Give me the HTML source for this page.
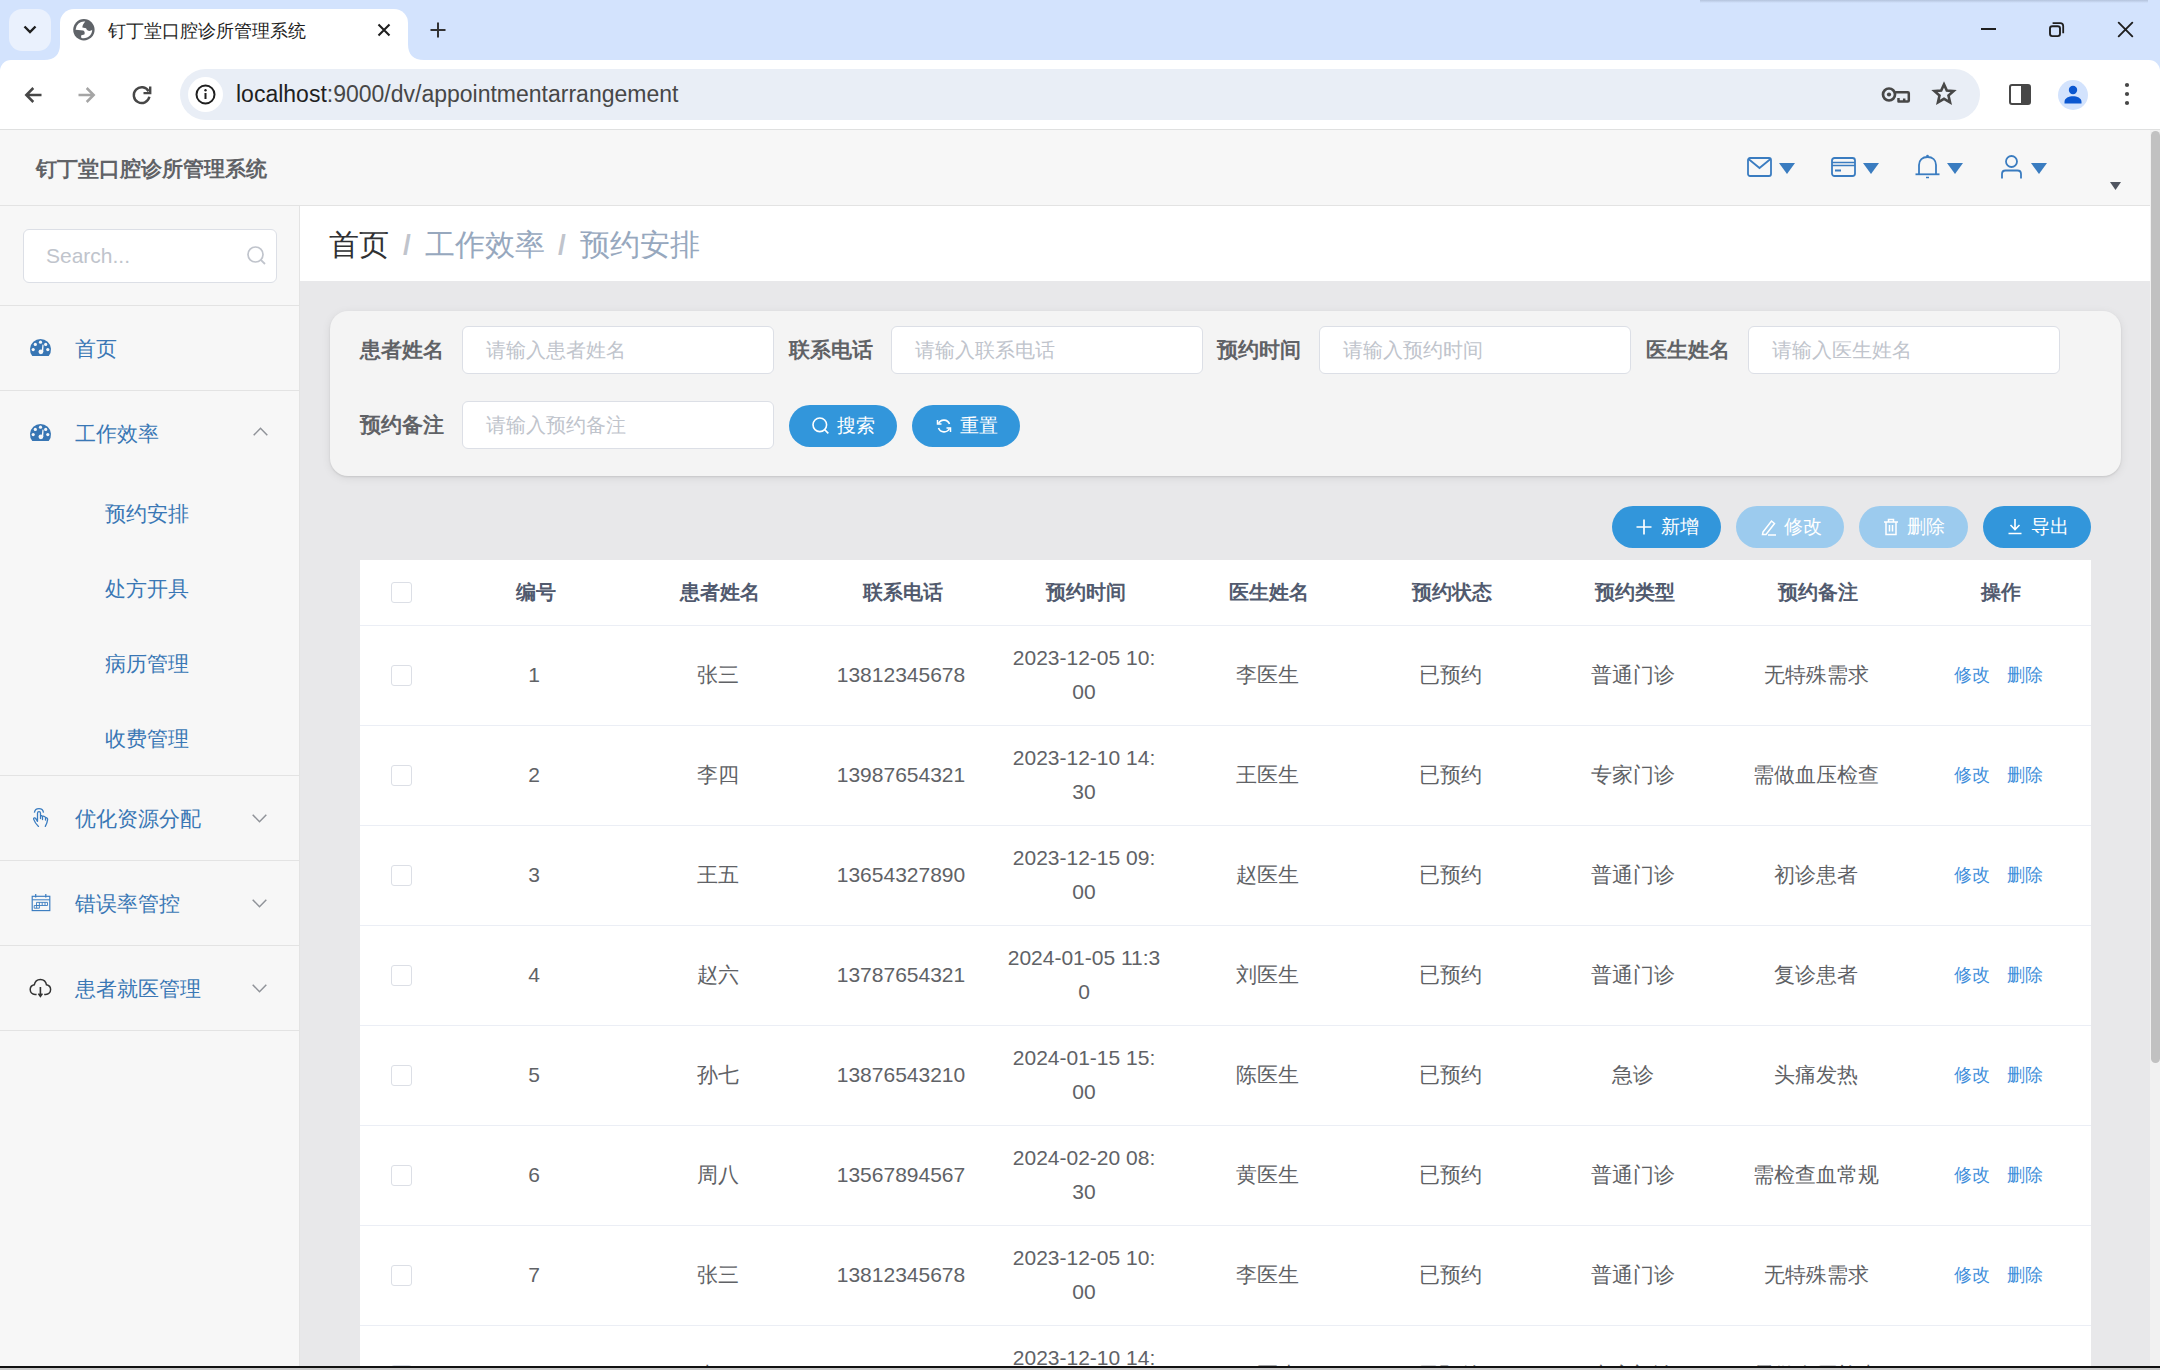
<!DOCTYPE html>
<html><head><meta charset="utf-8">
<style>
*{margin:0;padding:0;box-sizing:border-box}
html,body{width:2160px;height:1370px;overflow:hidden;background:#fff;font-family:"Liberation Sans",sans-serif}
.a{position:absolute}
svg{position:absolute;overflow:visible}
#tabstrip{left:0;top:0;width:2160px;height:80px;background:#d3e3fd}
#toolbar{left:0;top:60px;width:2160px;height:69px;background:#fff}
#chromeline{left:0;top:129px;width:2160px;height:2px;background:#dfe0e0}
#urlpill{left:180px;top:69px;width:1800px;height:51px;border-radius:26px;background:#e9eef6}
.tabtitle{left:108px;top:18px;font-size:18px;line-height:26px;color:#1f1f1f;white-space:nowrap}
.url{left:236px;top:79px;font-size:23px;line-height:30px;color:#474747;white-space:nowrap}

#hdr{left:0;top:130px;width:2150px;height:76px;background:#f7f7f7;border-bottom:1px solid #e3e3e3}
.apptitle{left:36px;top:154px;font-size:21px;line-height:30px;font-weight:bold;color:#606266;white-space:nowrap}
#side{left:0;top:206px;width:300px;height:1164px;background:#f7f7f7;border-right:1px solid #e3e3e3}
#crumb{left:300px;top:206px;width:1850px;height:75px;background:#fff}
#content{left:300px;top:281px;width:1850px;height:1089px;background:#e8e8ea}
#sbtrack{left:2150px;top:130px;width:10px;height:1240px;background:#f1f1f1}
#sbthumb{left:2151px;top:131px;width:9px;height:932px;background:#c1c1c1;border-radius:5px}
#bottomline{left:0;top:1366px;width:2160px;height:2px;background:#111}
#bottomline2{left:0;top:1368px;width:2160px;height:2px;background:#c9c9c9}

.ico{position:absolute}
.menu{position:absolute;left:0;width:299px;height:84px;border-bottom:1px solid #e3e3e3}
.mtxt{position:absolute;left:75px;font-size:21px;line-height:30px;color:#3a77b5;white-space:nowrap}
.stxt{position:absolute;left:105px;font-size:21px;line-height:30px;color:#3a77b5;white-space:nowrap}
.crumbt{position:absolute;top:225px;font-size:30px;line-height:40px;white-space:nowrap}
#card{left:330px;top:311px;width:1791px;height:165px;background:#f4f4f4;border-radius:18px;box-shadow:0 1px 2px rgba(0,0,0,0.10),0 2px 10px rgba(0,0,0,0.08)}
.lbl{position:absolute;font-size:21px;line-height:30px;font-weight:bold;color:#606266;white-space:nowrap}
.inp{position:absolute;width:312px;height:48px;background:#fff;border:1px solid #dcdfe6;border-radius:6px}
.ph{position:absolute;left:23px;top:8px;font-size:20px;line-height:30px;color:#c0c4cc;white-space:nowrap}
.btn{position:absolute;height:42px;border-radius:21px;color:#fff;font-size:19px;line-height:42px;white-space:nowrap}
.btn svg{position:absolute}
.btn span{position:absolute;top:0}
#tbl{left:360px;top:560px;width:1731px;height:806px;background:#fff}
.th{position:absolute;font-size:20px;line-height:30px;font-weight:bold;color:#515a6e;white-space:nowrap;transform:translateX(-50%);margin-left:1.5px}
.td{position:absolute;font-size:21px;line-height:34px;color:#606266;white-space:nowrap;transform:translateX(-50%);text-align:center}
.cb{position:absolute;left:391px;width:21px;height:21px;border:1px solid #dcdfe6;border-radius:3px;background:#fff}
.rowline{position:absolute;left:360px;width:1731px;height:1px;background:#ebeef5}
.lnk{position:absolute;font-size:18px;line-height:28px;color:#3f8fdb;white-space:nowrap}
</style></head><body>
<!-- ===== browser chrome ===== -->
<div id="tabstrip" class="a"></div>
<div class="a" style="left:1700px;top:0;width:448px;height:3px;background:linear-gradient(#b4c3dc,#d3e3fd)"></div>
<div class="a" style="left:9px;top:9px;width:42px;height:42px;border-radius:13px;background:#eaf1fd"></div>
<svg style="left:0;top:0" width="60" height="60"><path d="M24.5 26.5 L30 32 L35.5 26.5" fill="none" stroke="#1f1f1f" stroke-width="2.4"/></svg>
<!-- tab -->
<div class="a" style="left:60px;top:9px;width:348px;height:60px;background:#fff;border-radius:14px 14px 0 0"></div>
<svg style="left:44px;top:44px" width="16" height="16"><path d="M0 16 Q16 16 16 0 L16 16 Z" fill="#fff"/></svg>
<svg style="left:408px;top:44px" width="16" height="16"><path d="M16 16 Q0 16 0 0 L0 16 Z" fill="#fff"/></svg>
<svg style="left:73px;top:19px" width="22" height="22" viewBox="0 0 22 22"><circle cx="10.9" cy="10.8" r="10.7" fill="#5f6368"/><path d="M2.6 10.7 A8.4 8.4 0 0 1 12.3 2.5 C10.6 4.4 9.2 6.4 9.4 8.5 L13.1 9.3 C13.7 11 15 11.9 16.5 11.9 C17.5 11.9 18.5 11.4 19.2 10.8 A8.4 8.4 0 0 1 8.4 18.9 C8 18 8 17 8.3 16.3 L11.4 15.5 C12 13.8 11.8 12.2 10.3 11.4 Z" fill="#fff"/></svg>
<div class="a tabtitle">钉丁堂口腔诊所管理系统</div>
<svg style="left:378px;top:24px" width="12" height="12"><path d="M0.5 0.5 L11.5 11.5 M11.5 0.5 L0.5 11.5" stroke="#1f1f1f" stroke-width="2.1"/></svg>
<svg style="left:430px;top:22px" width="16" height="16"><path d="M8 0.5 V15.5 M0.5 8 H15.5" stroke="#333" stroke-width="2"/></svg>
<!-- window controls -->
<svg style="left:1981px;top:28px" width="15" height="2"><rect width="15" height="2" fill="#1f1f1f"/></svg>
<svg style="left:2049px;top:22px" width="16" height="16"><rect x="1" y="4.3" width="10" height="9.8" rx="2.3" fill="none" stroke="#1f1f1f" stroke-width="1.9"/><path d="M3.6 1.1 H11.3 A2.9 2.9 0 0 1 14.2 4 V11.3" fill="none" stroke="#1f1f1f" stroke-width="1.8"/></svg>
<svg style="left:2118px;top:22px" width="15" height="15"><path d="M0.7 0.7 L14.3 14.3 M14.3 0.7 L0.7 14.3" stroke="#1f1f1f" stroke-width="1.9" stroke-linecap="round"/></svg>
<!-- toolbar -->
<div id="toolbar" class="a" style="border-radius:11px 11px 0 0"></div>
<svg style="left:24px;top:86px" width="18" height="18"><path d="M17.5 9 H3 M9.3 2 L2.3 9 L9.3 16" fill="none" stroke="#474747" stroke-width="2.5"/></svg>
<svg style="left:78px;top:86px" width="18" height="18"><path d="M0.5 9 H15 M8.7 2 L15.7 9 L8.7 16" fill="none" stroke="#a5a5a5" stroke-width="2.5"/></svg>
<svg style="left:131px;top:84px" width="22" height="22" viewBox="0 0 22 22"><path d="M17.6 7.3 A7.9 7.9 0 1 0 18.4 12.8" fill="none" stroke="#474747" stroke-width="2.4"/><path d="M19.2 2.4 V9.1 H12.5" fill="none" stroke="#474747" stroke-width="2.4"/></svg>
<div id="urlpill" class="a"></div>
<div class="a" style="left:188px;top:77px;width:35px;height:35px;border-radius:50%;background:#fff"></div>
<svg style="left:195px;top:84px" width="21" height="21" viewBox="0 0 21 21"><circle cx="10.5" cy="10.5" r="9" fill="none" stroke="#1f1f1f" stroke-width="2"/><rect x="9.5" y="9" width="2" height="6" fill="#1f1f1f"/><circle cx="10.5" cy="6.3" r="1.2" fill="#1f1f1f"/></svg>
<div class="a url"><span style="color:#1f1f1f">localhost</span>:9000/dv/appointmentarrangement</div>
<svg style="left:1881px;top:86px" width="30" height="18" viewBox="0 0 30 18"><circle cx="8" cy="8.5" r="6" fill="none" stroke="#474747" stroke-width="2.7"/><circle cx="8" cy="8.5" r="2.1" fill="#474747"/><path d="M14.2 6.3 H26.8 Q27.8 6.3 27.8 7.3 V14.6 Q27.8 15.6 26.8 15.6 H17.5 V12 M23.2 15.6 V12.5" fill="none" stroke="#474747" stroke-width="2.5" stroke-linejoin="round"/></svg>
<svg style="left:1931px;top:81px" width="26" height="25" viewBox="0 0 24 24"><path d="M12 3.2 L14.7 9.1 L21.2 9.7 L16.3 14 L17.8 20.5 L12 17.1 L6.2 20.5 L7.7 14 L2.8 9.7 L9.3 9.1 Z" fill="none" stroke="#474747" stroke-width="2.5" stroke-linejoin="miter"/></svg>
<svg style="left:2009px;top:84px" width="22" height="21" viewBox="0 0 22 21"><rect x="1" y="1" width="20" height="19" rx="2" fill="none" stroke="#474747" stroke-width="2"/><rect x="12" y="1" width="9" height="19" fill="#474747"/></svg>
<div class="a" style="left:2058px;top:80px;width:30px;height:30px;border-radius:50%;background:#d3e3fd"></div>
<svg style="left:2061px;top:84px" width="24" height="22" viewBox="0 0 24 22"><circle cx="12" cy="6" r="4.2" fill="#0b57d0"/><path d="M3.5 18 C3.5 14 8 12.3 12 12.3 C16 12.3 20.5 14 20.5 18 V19.5 H3.5Z" fill="#0b57d0"/></svg>
<svg style="left:2124px;top:82px" width="6" height="24"><circle cx="3" cy="3" r="2.1" fill="#474747"/><circle cx="3" cy="12" r="2.1" fill="#474747"/><circle cx="3" cy="21" r="2.1" fill="#474747"/></svg>
<div id="chromeline" class="a"></div>

<!-- ===== app ===== -->
<div id="hdr" class="a"></div>
<div class="a apptitle">钉丁堂口腔诊所管理系统</div>
<div id="side" class="a"></div>
<div id="crumb" class="a"></div>
<div id="content" class="a"></div>

<!-- header icons -->
<svg style="left:1747px;top:157px" width="25" height="20" viewBox="0 0 25 20"><rect x="1" y="1" width="23" height="18" rx="2" fill="none" stroke="#3a7cc0" stroke-width="1.8"/><path d="M1.5 2 L12.5 11 L23.5 2" fill="none" stroke="#3a7cc0" stroke-width="1.8"/></svg>
<svg style="left:1779px;top:163px" width="16" height="11"><path d="M0 0 H16 L8 11Z" fill="#3a7cc0"/></svg>
<svg style="left:1831px;top:157px" width="25" height="20" viewBox="0 0 25 20"><rect x="1" y="1" width="23" height="18" rx="2.5" fill="none" stroke="#3a7cc0" stroke-width="1.8"/><path d="M1 5.5 H24 M1 8.5 H24" stroke="#3a7cc0" stroke-width="1.6"/><rect x="4" y="12.5" width="6" height="2" fill="#3a7cc0"/></svg>
<svg style="left:1863px;top:163px" width="16" height="11"><path d="M0 0 H16 L8 11Z" fill="#3a7cc0"/></svg>
<svg style="left:1915px;top:154px" width="25" height="25" viewBox="0 0 25 25"><path d="M4 20 V11 C4 6 7.5 3 12.5 3 C17.5 3 21 6 21 11 V20" fill="none" stroke="#3a7cc0" stroke-width="1.8"/><path d="M0.5 20.3 H24.5" stroke="#3a7cc0" stroke-width="1.8"/><circle cx="12.5" cy="2" r="1.3" fill="#3a7cc0"/><path d="M11 23.5 H14" stroke="#3a7cc0" stroke-width="1.5"/></svg>
<svg style="left:1947px;top:163px" width="16" height="11"><path d="M0 0 H16 L8 11Z" fill="#3a7cc0"/></svg>
<svg style="left:2001px;top:155px" width="21" height="24" viewBox="0 0 21 24"><circle cx="10.5" cy="6.5" r="5.5" fill="none" stroke="#3a7cc0" stroke-width="1.8"/><path d="M1 23.5 V19 C1 17 2.5 15.5 4.5 15.5 H16.5 C18.5 15.5 20 17 20 19 V23.5" fill="none" stroke="#3a7cc0" stroke-width="1.8"/></svg>
<svg style="left:2031px;top:163px" width="16" height="11"><path d="M0 0 H16 L8 11Z" fill="#3a7cc0"/></svg>
<svg style="left:2110px;top:182px" width="11" height="8"><path d="M0 0 H11 L5.5 8Z" fill="#505560"/></svg>

<!-- sidebar -->
<div class="a" style="left:23px;top:229px;width:254px;height:54px;background:#fff;border:1px solid #dcdfe6;border-radius:6px"></div>
<div class="a" style="left:46px;top:241px;font-size:21px;line-height:30px;color:#c0c4cc">Search...</div>
<svg style="left:247px;top:246px" width="20" height="19" viewBox="0 0 20 19"><circle cx="8.5" cy="8.5" r="7.5" fill="none" stroke="#c0c4cc" stroke-width="1.7"/><path d="M13.8 13.8 L18 18" stroke="#c0c4cc" stroke-width="1.8"/></svg>
<div class="menu" style="top:305px;border-top:1px solid #e3e3e3;height:86px"></div>
<svg style="left:30px;top:339px" width="21" height="17" viewBox="0 0 21 17"><path d="M2.3 17 A10.5 10.5 0 1 1 18.7 17 Z" fill="#3876b4"/><circle cx="3.2" cy="10.6" r="1.6" fill="#f7f7f7"/><circle cx="5.3" cy="5.4" r="1.6" fill="#f7f7f7"/><circle cx="10.5" cy="3.2" r="1.6" fill="#f7f7f7"/><circle cx="15.7" cy="5.4" r="1.6" fill="#f7f7f7"/><circle cx="17.8" cy="10.6" r="1.6" fill="#f7f7f7"/><path d="M11.6 13 L12.4 5.5 L13.6 5.8 L13.2 13Z" fill="#f7f7f7"/><circle cx="10.9" cy="12.8" r="2.4" fill="#f7f7f7"/></svg>
<div class="mtxt" style="top:334px">首页</div>
<svg style="left:30px;top:424px" width="21" height="17" viewBox="0 0 21 17"><path d="M2.3 17 A10.5 10.5 0 1 1 18.7 17 Z" fill="#3876b4"/><circle cx="3.2" cy="10.6" r="1.6" fill="#f7f7f7"/><circle cx="5.3" cy="5.4" r="1.6" fill="#f7f7f7"/><circle cx="10.5" cy="3.2" r="1.6" fill="#f7f7f7"/><circle cx="15.7" cy="5.4" r="1.6" fill="#f7f7f7"/><circle cx="17.8" cy="10.6" r="1.6" fill="#f7f7f7"/><path d="M11.6 13 L12.4 5.5 L13.6 5.8 L13.2 13Z" fill="#f7f7f7"/><circle cx="10.9" cy="12.8" r="2.4" fill="#f7f7f7"/></svg>
<div class="mtxt" style="top:419px">工作效率</div>
<svg style="left:253px;top:427px" width="15" height="9"><path d="M0.7 8.3 L7.5 1.3 L14.3 8.3" fill="none" stroke="#909399" stroke-width="1.5"/></svg>
<div class="stxt" style="top:499px">预约安排</div>
<div class="stxt" style="top:574px">处方开具</div>
<div class="stxt" style="top:649px">病历管理</div>
<div class="stxt" style="top:724px">收费管理</div>
<div class="a" style="left:0;top:775px;width:299px;height:1px;background:#e3e3e3"></div>
<svg style="left:28px;top:802px" width="26" height="30" viewBox="0 0 26 30"><path d="M6.4 10.6 A4.6 4.6 0 0 1 15.5 10.6" fill="none" stroke="#3a7cc0" stroke-width="1.3"/><path d="M9.5 19.3 V11.2 C9.5 9.2 12.5 9.2 12.5 11.2 V16.5 M12.5 14.3 C12.9 13.5 14.4 13.6 14.5 14.5 V17.5 M14.5 14.7 C15 13.9 17.3 14.1 17.5 15.6 V18 M17.5 16.1 C18.5 15.3 19.8 16.1 19.6 17.6 C19.3 20.2 18.3 22.5 17.3 24.4 M9.5 19.3 L7.6 16.4 C7 15.5 5.3 15.8 5.6 17.1 C6.5 19.6 8.5 22.6 10.5 24.4" fill="none" stroke="#3a7cc0" stroke-width="1.3" stroke-linecap="round" stroke-linejoin="round"/></svg>
<div class="mtxt" style="top:804px">优化资源分配</div>
<svg style="left:252px;top:814px" width="15" height="9"><path d="M0.7 0.7 L7.5 7.7 L14.3 0.7" fill="none" stroke="#909399" stroke-width="1.5"/></svg>
<div class="a" style="left:0;top:860px;width:299px;height:1px;background:#e3e3e3"></div>
<svg style="left:28px;top:888px" width="26" height="28" viewBox="0 0 26 28"><rect x="4.2" y="8.3" width="17.6" height="14.3" fill="none" stroke="#3a7cc0" stroke-width="1.15"/><path d="M4.2 11.8 H21.8" stroke="#3a7cc0" stroke-width="1"/><path d="M7.7 6 V9.5 M17.8 6 V9.5" stroke="#3a7cc0" stroke-width="1.2"/><path d="M8.5 14.4 H19.5 V17.5 H8.5 Z M11.4 14.4 V17.5 M14.2 14.4 V17.5 M17 14.4 V17.5 M6.2 17.5 H11.4 V20.2 H6.2 Z M8.6 17.5 V20.2" fill="none" stroke="#3a7cc0" stroke-width="0.9"/></svg>
<div class="mtxt" style="top:889px">错误率管控</div>
<svg style="left:252px;top:899px" width="15" height="9"><path d="M0.7 0.7 L7.5 7.7 L14.3 0.7" fill="none" stroke="#909399" stroke-width="1.5"/></svg>
<div class="a" style="left:0;top:945px;width:299px;height:1px;background:#e3e3e3"></div>
<svg style="left:26px;top:972px" width="30" height="28" viewBox="0 0 30 28"><path d="M10.6 22.4 H9 C6.2 22.4 4.2 20.2 4.2 17.6 C4.2 15.1 5.9 13.3 8.3 12.8 C8.9 9.4 11.3 7.4 14.4 7.4 C17.5 7.4 19.9 9.4 20.5 12.8 C22.9 13.3 24.6 15.1 24.6 17.6 C24.6 20.2 22.6 22.4 19.8 22.4 H18.2" fill="none" stroke="#333" stroke-width="1.5"/><path d="M14.4 15 V24.2 M12.4 21.6 L14.4 24.4 L16.4 21.6" fill="none" stroke="#333" stroke-width="1.6"/></svg>
<div class="mtxt" style="top:974px">患者就医管理</div>
<svg style="left:252px;top:984px" width="15" height="9"><path d="M0.7 0.7 L7.5 7.7 L14.3 0.7" fill="none" stroke="#909399" stroke-width="1.5"/></svg>
<div class="a" style="left:0;top:1030px;width:299px;height:1px;background:#e3e3e3"></div>

<!-- breadcrumb -->
<div class="crumbt" style="left:329px;color:#303133">首页</div>
<div class="crumbt" style="left:403px;color:#c0c4cc;font-size:28px;font-weight:bold">/</div>
<div class="crumbt" style="left:425px;color:#97a8be">工作效率</div>
<div class="crumbt" style="left:558px;color:#c0c4cc;font-size:28px;font-weight:bold">/</div>
<div class="crumbt" style="left:580px;color:#97a8be">预约安排</div>

<!-- search card -->
<div id="card" class="a"></div>
<div class="lbl" style="left:360px;top:335px">患者姓名</div>
<div class="inp" style="left:462px;top:326px"><div class="ph">请输入患者姓名</div></div>
<div class="lbl" style="left:789px;top:335px">联系电话</div>
<div class="inp" style="left:891px;top:326px"><div class="ph">请输入联系电话</div></div>
<div class="lbl" style="left:1217px;top:335px">预约时间</div>
<div class="inp" style="left:1319px;top:326px"><div class="ph">请输入预约时间</div></div>
<div class="lbl" style="left:1646px;top:335px">医生姓名</div>
<div class="inp" style="left:1748px;top:326px"><div class="ph">请输入医生姓名</div></div>
<div class="lbl" style="left:360px;top:410px">预约备注</div>
<div class="inp" style="left:462px;top:401px"><div class="ph">请输入预约备注</div></div>
<div class="btn" style="left:789px;top:405px;width:108px;background:#3296db">
 <svg style="left:23px;top:12px" width="18" height="17" viewBox="0 0 18 17"><circle cx="7.8" cy="7.8" r="6.8" fill="none" stroke="#fff" stroke-width="1.6"/><path d="M12.5 12.5 L16.3 16.3" stroke="#fff" stroke-width="1.7"/></svg>
 <span style="left:48px">搜索</span></div>
<div class="btn" style="left:912px;top:405px;width:108px;background:#3296db">
 <svg style="left:24px;top:13px" width="16" height="16" viewBox="0 0 16 16"><path d="M13.5 6 A6 6 0 0 0 2.5 5.5 M2.5 10 A6 6 0 0 0 13.5 10.5" fill="none" stroke="#fff" stroke-width="1.6"/><path d="M1.5 2 V6 H5.5 M14.5 14 V10 H10.5" fill="none" stroke="#fff" stroke-width="1.5"/></svg>
 <span style="left:48px">重置</span></div>

<!-- action buttons -->
<div class="btn" style="left:1612px;top:506px;width:109px;background:#3296db">
 <svg style="left:24px;top:13px" width="16" height="16"><path d="M8 0.5 V15.5 M0.5 8 H15.5" stroke="#fff" stroke-width="1.7"/></svg>
 <span style="left:49px">新增</span></div>
<div class="btn" style="left:1736px;top:506px;width:108px;background:#9ccbee">
 <svg style="left:24px;top:12px" width="18" height="18" viewBox="0 0 18 18"><path d="M3 14 L11.5 3 L14.5 5.5 L6 16.5 H2.5 Z M8 17 H16" fill="none" stroke="#fff" stroke-width="1.5"/></svg>
 <span style="left:48px">修改</span></div>
<div class="btn" style="left:1859px;top:506px;width:109px;background:#9ccbee">
 <svg style="left:24px;top:12px" width="16" height="18" viewBox="0 0 16 18"><path d="M1 4 H15 M5.5 4 V1.5 H10.5 V4 M3 4 V16.5 H13 V4 M6.5 7 V13.5 M9.5 7 V13.5" fill="none" stroke="#fff" stroke-width="1.5"/></svg>
 <span style="left:48px">删除</span></div>
<div class="btn" style="left:1983px;top:506px;width:108px;background:#3296db">
 <svg style="left:24px;top:12px" width="16" height="17" viewBox="0 0 16 17"><path d="M8 1 V11.5 M3.5 7 L8 11.5 L12.5 7 M1.5 15.5 H14.5" fill="none" stroke="#fff" stroke-width="1.6"/></svg>
 <span style="left:48px">导出</span></div>

<!-- table -->
<div id="tbl" class="a"></div>
<div class="cb" style="top:582px"></div>
<div class="th" style="left:534px;top:577px">编号</div>
<div class="th" style="left:718px;top:577px">患者姓名</div>
<div class="th" style="left:901px;top:577px">联系电话</div>
<div class="th" style="left:1084px;top:577px">预约时间</div>
<div class="th" style="left:1267px;top:577px">医生姓名</div>
<div class="th" style="left:1450px;top:577px">预约状态</div>
<div class="th" style="left:1633px;top:577px">预约类型</div>
<div class="th" style="left:1816px;top:577px">预约备注</div>
<div class="th" style="left:1999px;top:577px">操作</div>
<div class="rowline" style="top:625px"></div>
<div class="cb" style="top:665px"></div>
<div class="td" style="left:534px;top:658px">1</div>
<div class="td" style="left:718px;top:658px">张三</div>
<div class="td" style="left:901px;top:658px">13812345678</div>
<div class="td" style="left:1084px;top:641px">2023-12-05 10:<br>00</div>
<div class="td" style="left:1267px;top:658px">李医生</div>
<div class="td" style="left:1450px;top:658px">已预约</div>
<div class="td" style="left:1633px;top:658px">普通门诊</div>
<div class="td" style="left:1816px;top:658px">无特殊需求</div>
<div class="lnk" style="left:1954px;top:661px">修改</div>
<div class="lnk" style="left:2007px;top:661px">删除</div>
<div class="rowline" style="top:725px"></div>
<div class="cb" style="top:765px"></div>
<div class="td" style="left:534px;top:758px">2</div>
<div class="td" style="left:718px;top:758px">李四</div>
<div class="td" style="left:901px;top:758px">13987654321</div>
<div class="td" style="left:1084px;top:741px">2023-12-10 14:<br>30</div>
<div class="td" style="left:1267px;top:758px">王医生</div>
<div class="td" style="left:1450px;top:758px">已预约</div>
<div class="td" style="left:1633px;top:758px">专家门诊</div>
<div class="td" style="left:1816px;top:758px">需做血压检查</div>
<div class="lnk" style="left:1954px;top:761px">修改</div>
<div class="lnk" style="left:2007px;top:761px">删除</div>
<div class="rowline" style="top:825px"></div>
<div class="cb" style="top:865px"></div>
<div class="td" style="left:534px;top:858px">3</div>
<div class="td" style="left:718px;top:858px">王五</div>
<div class="td" style="left:901px;top:858px">13654327890</div>
<div class="td" style="left:1084px;top:841px">2023-12-15 09:<br>00</div>
<div class="td" style="left:1267px;top:858px">赵医生</div>
<div class="td" style="left:1450px;top:858px">已预约</div>
<div class="td" style="left:1633px;top:858px">普通门诊</div>
<div class="td" style="left:1816px;top:858px">初诊患者</div>
<div class="lnk" style="left:1954px;top:861px">修改</div>
<div class="lnk" style="left:2007px;top:861px">删除</div>
<div class="rowline" style="top:925px"></div>
<div class="cb" style="top:965px"></div>
<div class="td" style="left:534px;top:958px">4</div>
<div class="td" style="left:718px;top:958px">赵六</div>
<div class="td" style="left:901px;top:958px">13787654321</div>
<div class="td" style="left:1084px;top:941px">2024-01-05 11:3<br>0</div>
<div class="td" style="left:1267px;top:958px">刘医生</div>
<div class="td" style="left:1450px;top:958px">已预约</div>
<div class="td" style="left:1633px;top:958px">普通门诊</div>
<div class="td" style="left:1816px;top:958px">复诊患者</div>
<div class="lnk" style="left:1954px;top:961px">修改</div>
<div class="lnk" style="left:2007px;top:961px">删除</div>
<div class="rowline" style="top:1025px"></div>
<div class="cb" style="top:1065px"></div>
<div class="td" style="left:534px;top:1058px">5</div>
<div class="td" style="left:718px;top:1058px">孙七</div>
<div class="td" style="left:901px;top:1058px">13876543210</div>
<div class="td" style="left:1084px;top:1041px">2024-01-15 15:<br>00</div>
<div class="td" style="left:1267px;top:1058px">陈医生</div>
<div class="td" style="left:1450px;top:1058px">已预约</div>
<div class="td" style="left:1633px;top:1058px">急诊</div>
<div class="td" style="left:1816px;top:1058px">头痛发热</div>
<div class="lnk" style="left:1954px;top:1061px">修改</div>
<div class="lnk" style="left:2007px;top:1061px">删除</div>
<div class="rowline" style="top:1125px"></div>
<div class="cb" style="top:1165px"></div>
<div class="td" style="left:534px;top:1158px">6</div>
<div class="td" style="left:718px;top:1158px">周八</div>
<div class="td" style="left:901px;top:1158px">13567894567</div>
<div class="td" style="left:1084px;top:1141px">2024-02-20 08:<br>30</div>
<div class="td" style="left:1267px;top:1158px">黄医生</div>
<div class="td" style="left:1450px;top:1158px">已预约</div>
<div class="td" style="left:1633px;top:1158px">普通门诊</div>
<div class="td" style="left:1816px;top:1158px">需检查血常规</div>
<div class="lnk" style="left:1954px;top:1161px">修改</div>
<div class="lnk" style="left:2007px;top:1161px">删除</div>
<div class="rowline" style="top:1225px"></div>
<div class="cb" style="top:1265px"></div>
<div class="td" style="left:534px;top:1258px">7</div>
<div class="td" style="left:718px;top:1258px">张三</div>
<div class="td" style="left:901px;top:1258px">13812345678</div>
<div class="td" style="left:1084px;top:1241px">2023-12-05 10:<br>00</div>
<div class="td" style="left:1267px;top:1258px">李医生</div>
<div class="td" style="left:1450px;top:1258px">已预约</div>
<div class="td" style="left:1633px;top:1258px">普通门诊</div>
<div class="td" style="left:1816px;top:1258px">无特殊需求</div>
<div class="lnk" style="left:1954px;top:1261px">修改</div>
<div class="lnk" style="left:2007px;top:1261px">删除</div>
<div class="rowline" style="top:1325px"></div>
<div class="cb" style="top:1365px"></div>
<div class="td" style="left:534px;top:1358px">8</div>
<div class="td" style="left:718px;top:1358px">李四</div>
<div class="td" style="left:901px;top:1358px">13987654321</div>
<div class="td" style="left:1084px;top:1341px">2023-12-10 14:<br>30</div>
<div class="td" style="left:1267px;top:1358px">王医生</div>
<div class="td" style="left:1450px;top:1358px">已预约</div>
<div class="td" style="left:1633px;top:1358px">专家门诊</div>
<div class="td" style="left:1816px;top:1358px">需做血压检查</div>
<div class="lnk" style="left:1954px;top:1361px">修改</div>
<div class="lnk" style="left:2007px;top:1361px">删除</div>
<div class="rowline" style="top:1425px"></div>
<div id="sbtrack" class="a"></div>
<div id="sbthumb" class="a"></div>
<div id="bottomline" class="a"></div>
<div id="bottomline2" class="a"></div>
</body></html>
